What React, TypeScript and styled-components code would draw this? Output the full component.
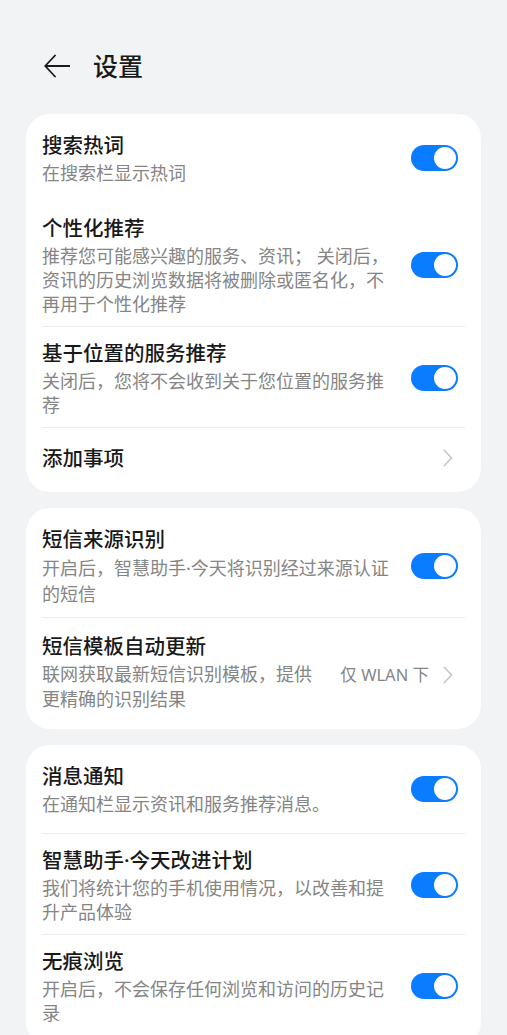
import React from "react";
import styled, { createGlobalStyle } from "styled-components";

const GlobalStyle = createGlobalStyle`
  html, body {
    margin: 0;
    padding: 0;
    background: #f1f3f5;
  }
  body {
    font-family: "Noto Sans", "Noto Sans CJK SC", sans-serif;
    -webkit-font-smoothing: antialiased;
  }
  * { box-sizing: border-box; }
`;

const Page = styled.div`
  padding: 0 26px 40px;
  background: #f1f3f5;
  min-height: 1035px;
`;

const Header = styled.header`
  display: flex;
  align-items: center;
  gap: 23px;
  height: 56px;
  margin-top: 38px;
  margin-bottom: 20px;
  padding-left: 18px;
`;

const BackButton = styled.button`
  display: flex;
  align-items: center;
  justify-content: center;
  width: 26px;
  height: 24px;
  padding: 0;
  border: none;
  background: transparent;
  cursor: pointer;
`;

const PageTitle = styled.h1`
  margin: 0;
  font-size: 25px;
  font-weight: 500;
  line-height: 32px;
  color: #191919;
`;

const Card = styled.section`
  background: #ffffff;
  border-radius: 24px;
  padding: 5px 0;
  margin-bottom: 16px;
`;

const Row = styled.div<{ $pt: number; $pb: number; $divider: boolean }>`
  display: flex;
  align-items: center;
  margin: 0 16px;
  padding: ${(p) => p.$pt}px 0 ${(p) => p.$pb}px;
  border-bottom: ${(p) => (p.$divider ? "1px solid #ebebeb" : "none")};
`;

const NavRow = styled.div`
  display: flex;
  align-items: center;
  min-height: 59px;
  margin: 0 16px;
`;

const TextCol = styled.div`
  flex: 1;
  min-width: 0;
  display: flex;
  flex-direction: column;
  gap: 2px;
`;

const Title = styled.div`
  font-size: 20.5px;
  font-weight: 500;
  line-height: 28px;
  color: #191919;
`;

const Sub = styled.div<{ $lh: number }>`
  font-size: 18px;
  line-height: ${(p) => p.$lh}px;
  color: #858585;
`;

const Toggle = styled.span<{ $on: boolean }>`
  position: relative;
  flex: none;
  width: 47px;
  height: 26px;
  margin-left: 14px;
  margin-right: 7px;
  border-radius: 13px;
  background: ${(p) => (p.$on ? "#0a7cff" : "#d8d8d8")};
  &::after {
    content: "";
    position: absolute;
    top: 2px;
    left: ${(p) => (p.$on ? "23px" : "2px")};
    width: 22px;
    height: 22px;
    border-radius: 50%;
    background: #ffffff;
  }
`;

const Trailing = styled.div<{ $shift?: number }>`
  flex: none;
  display: flex;
  align-items: center;
  gap: 14px;
  margin-left: 20px;
  margin-right: 12px;
  margin-top: ${(p) => p.$shift ?? 0}px;
`;

const Value = styled.span`
  font-size: 16.5px;
  line-height: 24px;
  color: #858585;
`;

const Chevron = () => (
  <svg width="10" height="18" viewBox="0 0 10 18" fill="none">
    <path d="M1.2 1.2 L8.6 9 L1.2 16.8" stroke="#c4c4c4" strokeWidth="1.5" strokeLinecap="round" strokeLinejoin="round" />
  </svg>
);

const BackArrow = () => (
  <svg width="26" height="24" viewBox="0 0 26 24" fill="none">
    <path d="M11 1.5 L1.2 12 L11 22.5 M1.2 12 H25.5" stroke="#191919" strokeWidth="1.8" strokeLinecap="round" strokeLinejoin="round" />
  </svg>
);

type Item = {
  title: string;
  sub?: string;
  toggle?: boolean;
  value?: string;
  nav?: boolean;
  pt?: number;
  pb?: number;
  lh?: number;
  divider?: boolean;
};

const cards: Item[][] = [
  [
    { title: "搜索热词", sub: "在搜索栏显示热词", toggle: true, pb: 17, divider: false },
    {
      title: "个性化推荐",
      sub: "推荐您可能感兴趣的服务、资讯； 关闭后，资讯的历史浏览数据将被删除或匿名化，不再用于个性化推荐",
      toggle: true,
      divider: true,
    },
    { title: "基于位置的服务推荐", sub: "关闭后，您将不会收到关于您位置的服务推荐", toggle: true, divider: true },
    { title: "添加事项", nav: true },
  ],
  [
    { title: "短信来源识别", sub: "开启后，智慧助手·今天将识别经过来源认证的短信", toggle: true, lh: 26, divider: true },
    {
      title: "短信模板自动更新",
      sub: "联网获取最新短信识别模板，提供更精确的识别结果",
      value: "仅 WLAN 下",
      pt: 14,
      pb: 12,
      lh: 25,
      divider: false,
    },
  ],
  [
    { title: "消息通知", sub: "在通知栏显示资讯和服务推荐消息。", toggle: true, pb: 17, divider: true },
    { title: "智慧助手·今天改进计划", sub: "我们将统计您的手机使用情况，以改善和提升产品体验", toggle: true, divider: true },
    { title: "无痕浏览", sub: "开启后，不会保存任何浏览和访问的历史记录", toggle: true, pb: 16, divider: false },
  ],
];

export default function App() {
  return (
    <>
      <GlobalStyle />
      <Page>
        <Header>
          <BackButton aria-label="返回">
            <BackArrow />
          </BackButton>
          <PageTitle>设置</PageTitle>
        </Header>
        {cards.map((items, ci) => (
          <Card key={ci}>
            {items.map((it, i) =>
              it.nav ? (
                <NavRow key={i}>
                  <TextCol>
                    <Title>{it.title}</Title>
                  </TextCol>
                  <Trailing>
                    <Chevron />
                  </Trailing>
                </NavRow>
              ) : (
                <Row key={i} $pt={it.pt ?? 12} $pb={it.pb ?? 10} $divider={!!it.divider}>
                  <TextCol>
                    <Title>{it.title}</Title>
                    {it.sub && <Sub $lh={it.lh ?? 24}>{it.sub}</Sub>}
                  </TextCol>
                  {it.toggle !== undefined && <Toggle $on={it.toggle} />}
                  {it.value && (
                    <Trailing $shift={6}>
                      <Value>{it.value}</Value>
                      <Chevron />
                    </Trailing>
                  )}
                </Row>
              )
            )}
          </Card>
        ))}
      </Page>
    </>
  );
}
